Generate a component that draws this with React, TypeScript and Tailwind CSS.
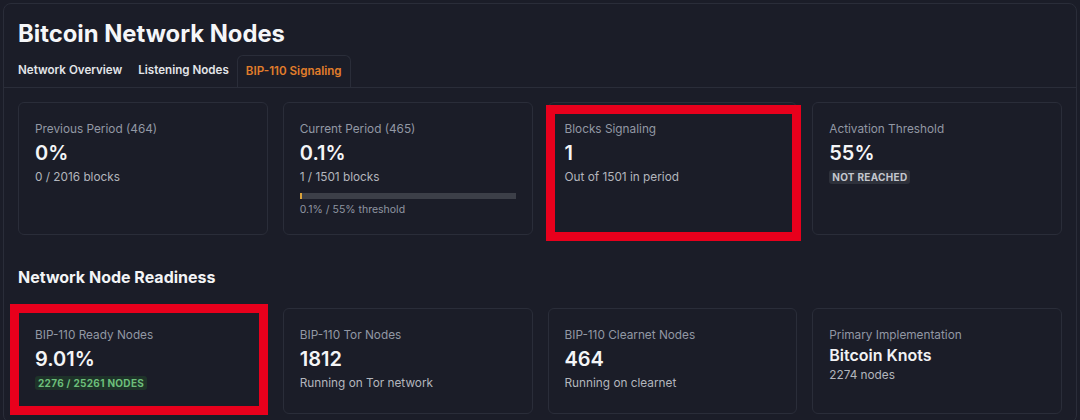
import React from "react";

type Stat = {
  label: string;
  value: string;
  sub?: string;
  badge?: { text: string; tone: "gray" | "green" };
  bar?: { pct: number; note: string };
  valueSize?: "lg" | "md";
  mark?: string;
};

const periodStats: Stat[] = [
  { label: "Previous Period (464)", value: "0%", sub: "0 / 2016 blocks" },
  {
    label: "Current Period (465)",
    value: "0.1%",
    sub: "1 / 1501 blocks",
    bar: { pct: 0.1 / 55, note: "0.1% / 55% threshold" },
  },
  {
    label: "Blocks Signaling",
    value: "1",
    sub: "Out of 1501 in period",
    mark: "-left-[3px] top-[2px] -right-[5px] -bottom-[7px]",
  },
  { label: "Activation Threshold", value: "55%", badge: { text: "NOT REACHED", tone: "gray" } },
];

const nodeStats: Stat[] = [
  {
    label: "BIP-110 Ready Nodes",
    value: "9.01%",
    badge: { text: "2276 / 25261 NODES", tone: "green" },
    mark: "-left-[9px] -top-[5px] -right-[1px] -bottom-[2px]",
  },
  { label: "BIP-110 Tor Nodes", value: "1812", sub: "Running on Tor network" },
  { label: "BIP-110 Clearnet Nodes", value: "464", sub: "Running on clearnet" },
  { label: "Primary Implementation", value: "Bitcoin Knots", sub: "2274 nodes", valueSize: "md" },
];

const StatCard = ({ stat, tall }: { stat: Stat; tall?: boolean }) => (
  <div
    className={`relative rounded-md border border-[#2a2d39] bg-[#1b1d28] px-4 py-4 ${tall ? "h-[106px]" : ""}`}
  >
    <div className="text-[11.8px] leading-5 text-[#9298a4]">{stat.label}</div>
    {stat.valueSize === "md" ? (
      <div className="text-[16px] leading-5 font-semibold text-[#f1f2f4]">{stat.value}</div>
    ) : (
      <div className="text-[20px] leading-7 font-semibold text-[#f4f5f7]">{stat.value}</div>
    )}
    {stat.sub && <div className="text-[11.8px] leading-5 text-[#b3b6bd]">{stat.sub}</div>}
    {stat.badge && (
      <div className="flex h-5 items-center">
        <span
          className={`rounded-[3px] px-[3px] py-px text-[10px] leading-3 font-bold tracking-[0.3px] ${
            stat.badge.tone === "green" ? "bg-[#1e3329] text-[#6cbf7a]" : "bg-[#2e313b] text-[#c4c7ce]"
          }`}
        >
          {stat.badge.text}
        </span>
      </div>
    )}
    {stat.bar && (
      <>
        <div className="mt-[6px] h-[6px] w-full bg-[#3c3f48]">
          <div
            className="h-full min-w-[2px] bg-[#d9a23b]"
            style={{ width: `${stat.bar.pct * 100}%` }}
          />
        </div>
        <div className="mt-[3px] text-[10.5px] leading-4 text-[#8f95a1]">{stat.bar.note}</div>
      </>
    )}
    {stat.mark && (
      <div className={`pointer-events-none absolute border-[9px] border-[#e8001c] ${stat.mark}`} />
    )}
  </div>
);

export default function App() {
  const tabs = ["Network Overview", "Listening Nodes", "BIP-110 Signaling"];
  return (
    <div
      className="min-h-[420px] w-[1080px] bg-[#1b1d28] p-[3px]"
      style={{ fontFamily: "Inter, 'Noto Sans', sans-serif" }}
    >
      <div className="h-[420px] overflow-hidden rounded-lg border border-[#2a2d39] bg-[#1b1d28]">
        <div className="border-b border-[#2a2d39] px-[14px] pt-[14px]">
          <h1 className="text-[23.8px] leading-8 font-bold text-[#f5f6f8]">Bitcoin Network Nodes</h1>
          <div className="-ml-2 mt-[5px] flex">
            {tabs.map((t, i) => {
              const active = i === tabs.length - 1;
              return (
                <div
                  key={t}
                  className={`flex h-8 items-center px-2 text-[11.6px] font-semibold ${
                    active
                      ? "rounded-t-md border-x border-t border-[#2a2d39] text-[#e27d2b]"
                      : "text-[#e3e5e9]"
                  }`}
                >
                  {t}
                </div>
              );
            })}
          </div>
        </div>

        <div className="px-[14px] pt-[14px]">
          <div className="grid grid-cols-4 gap-[15px]">
            {periodStats.map((s) => (
              <StatCard key={s.label} stat={s} />
            ))}
          </div>

          <h2 className="mt-[30px] mb-[19px] text-[16px] leading-6 font-bold text-[#f3f4f6]">
            Network Node Readiness
          </h2>

          <div className="grid grid-cols-4 gap-[15px]">
            {nodeStats.map((s) => (
              <StatCard key={s.label} stat={s} tall />
            ))}
          </div>
        </div>
      </div>
    </div>
  );
}
